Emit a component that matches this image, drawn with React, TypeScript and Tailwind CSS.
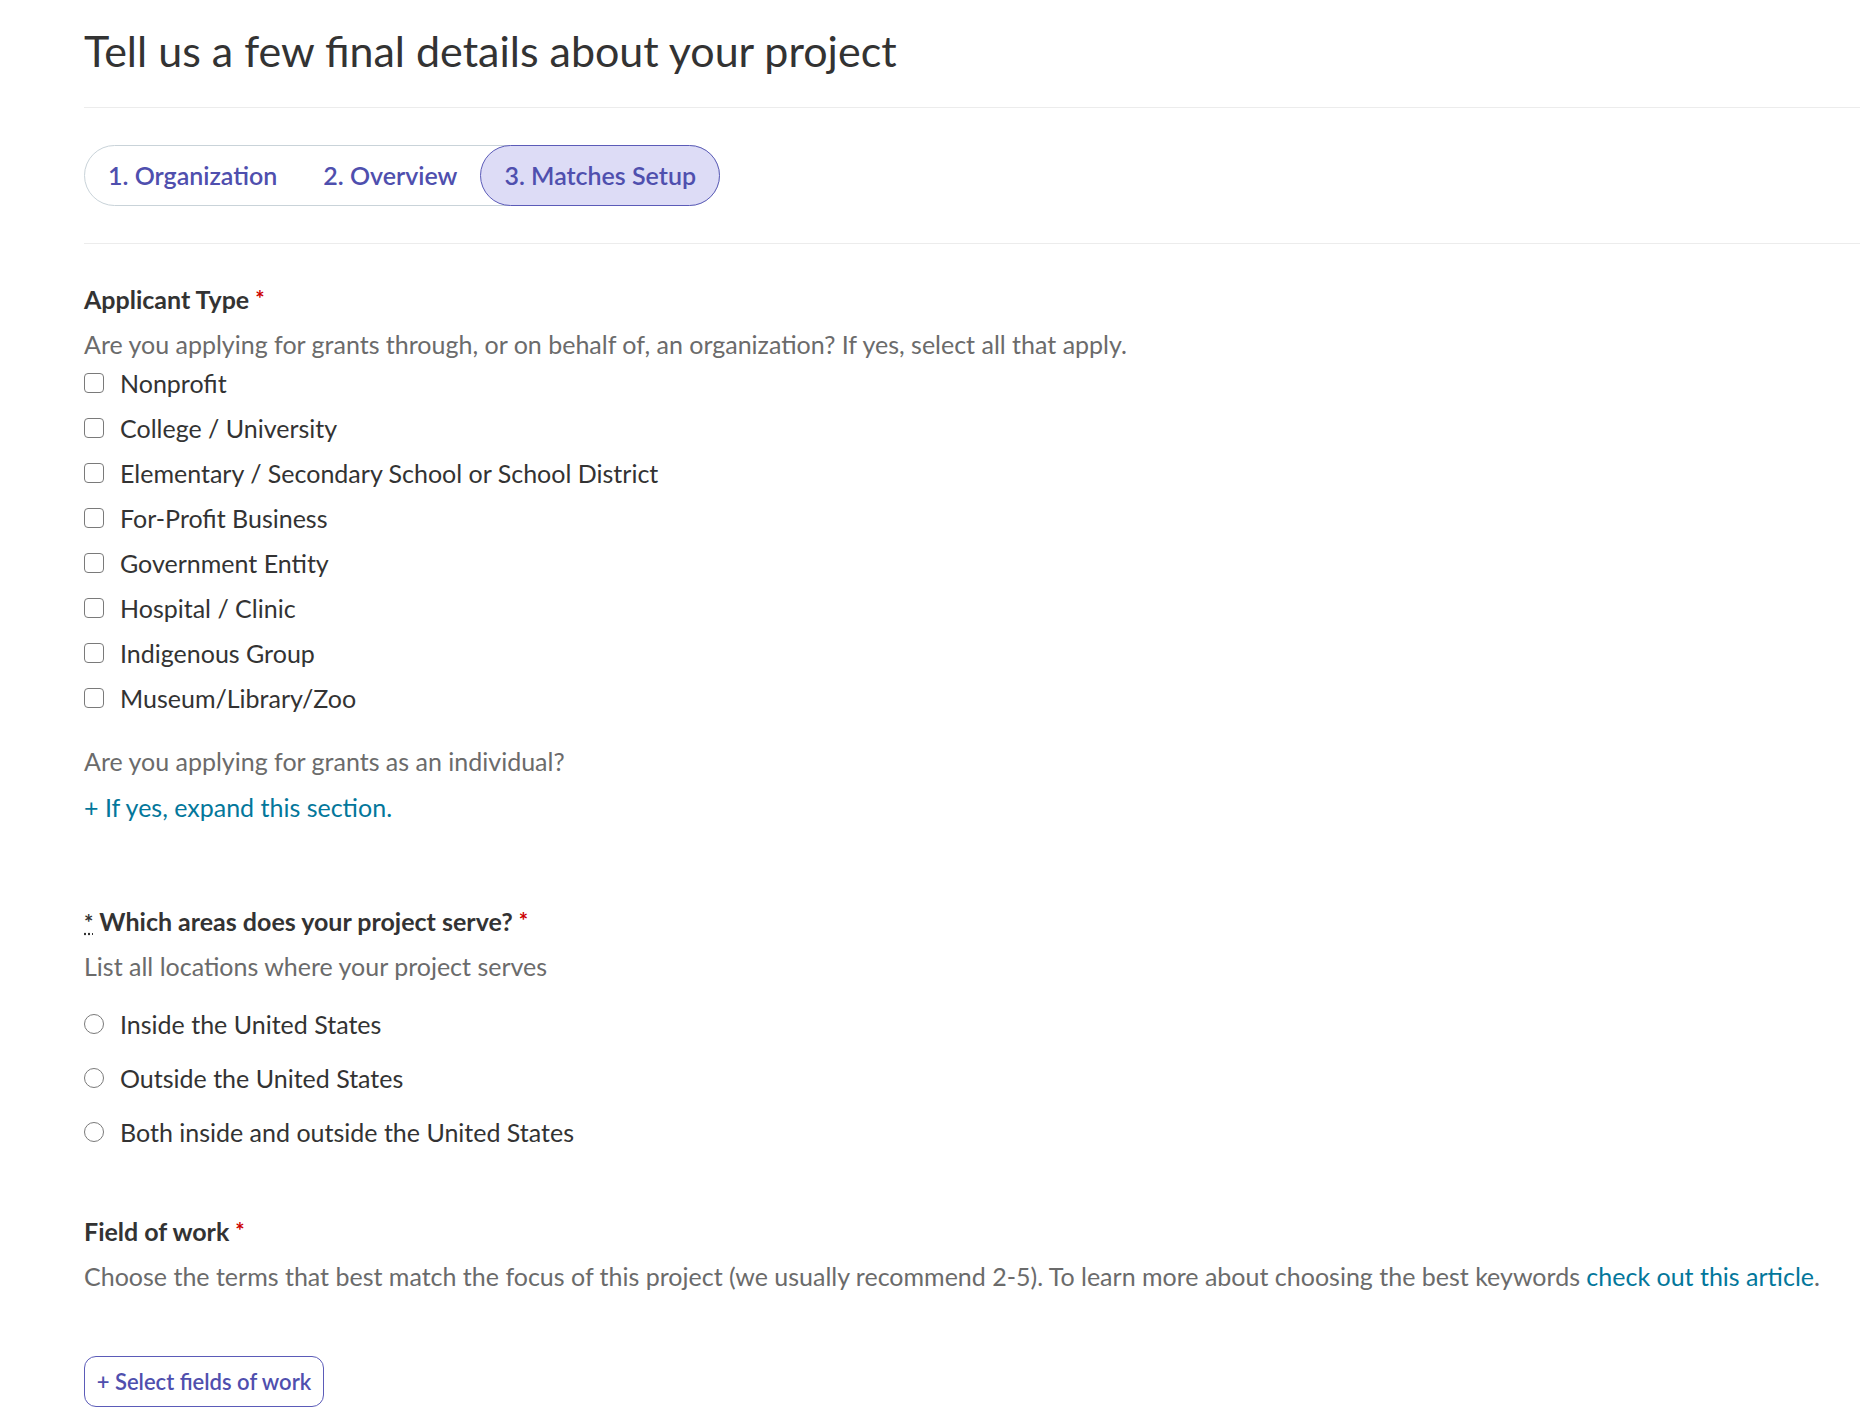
import React from 'react'

const orgTypes = [
  'Nonprofit',
  'College / University',
  'Elementary / Secondary School or School District',
  'For-Profit Business',
  'Government Entity',
  'Hospital / Clinic',
  'Indigenous Group',
  'Museum/Library/Zoo',
]

const areas = [
  'Inside the United States',
  'Outside the United States',
  'Both inside and outside the United States',
]

const steps = ['1. Organization', '2. Overview', '3. Matches Setup']

function Required() {
  return <span className="ml-[6px] text-[22px] align-top text-[#cc0000]">*</span>
}

export default function App() {
  return (
    <main className="min-h-screen bg-white pl-[84px] font-['Lato','Open_Sans',sans-serif] text-[#333333]">
      <h1 className="pt-[27px] text-[43px] leading-[48px] text-[#333333]">
        Tell us a few final details about your project
      </h1>

      <div className="mt-[32px] h-px bg-[#ececec]" />

      <div className="py-[37px]">
        <div className="inline-flex h-[61px] items-stretch rounded-full border border-[#c9d3d9]">
          {steps.map((step, i) => {
            const active = i === steps.length - 1
            return (
              <div
                key={step}
                className={
                  active
                    ? 'flex items-center rounded-full border border-[#5b5bb8] bg-[#dddcf6] px-[23px] text-[25px] font-semibold text-[#4f4fae] -my-px -mr-px'
                    : 'flex items-center px-[23px] text-[25px] font-semibold text-[#4f4fae]'
                }
              >
                {step}
              </div>
            )
          })}
        </div>
      </div>

      <div className="h-px bg-[#ececec]" />

      <section className="mt-[40px]">
        <h2 className="text-[25px] leading-[30px] font-bold">
          Applicant Type
          <Required />
        </h2>
        <p className="mt-[15px] text-[25px] leading-[30px] text-[#6b6b6b]">
          Are you applying for grants through, or on behalf of, an organization? If yes, select all that apply.
        </p>
        <ul className="mt-px flex flex-col">
          {orgTypes.map(t => (
            <li key={t} className="flex h-[45px] items-center gap-[16px]">
              <span className="size-[20px] rounded-[4px] border-[1.5px] border-[#7a7a7a] bg-white" />
              <span className="text-[25px] leading-[30px] text-[#333333]">{t}</span>
            </li>
          ))}
        </ul>

        <p className="mt-[26px] text-[25px] leading-[30px] text-[#6b6b6b]">
          Are you applying for grants as an individual?
        </p>
        <a className="mt-[16px] block text-[25px] leading-[30px] text-[#03779b]">
          + If yes, expand this section.
        </a>
      </section>

      <section className="mt-[84px]">
        <h2 className="text-[25px] leading-[30px] font-bold">
          <abbr className="mr-[6px] text-[22px] font-bold underline decoration-dotted">*</abbr>
          Which areas does your project serve?
          <Required />
        </h2>
        <p className="mt-[13px] text-[25px] leading-[30px] text-[#6b6b6b]">
          List all locations where your project serves
        </p>
        <ul className="mt-[16px] flex flex-col">
          {areas.map(a => (
            <li key={a} className="flex h-[54px] items-center gap-[16px]">
              <span className="size-[20px] rounded-full border-[1.5px] border-[#7a7a7a] bg-white" />
              <span className="text-[25px] leading-[30px] text-[#333333]">{a}</span>
            </li>
          ))}
        </ul>
      </section>

      <section className="mt-[57px] pb-[20px]">
        <h2 className="text-[25px] leading-[30px] font-bold">
          Field of work
          <Required />
        </h2>
        <p className="mt-[15px] text-[25px] leading-[30px] text-[#6b6b6b]">
          Choose the terms that best match the focus of this project (we usually recommend 2-5). To learn more about
          choosing the best keywords <a className="text-[#03779b]">check out this article</a>.
        </p>
        <button className="mt-[65px] flex h-[51px] w-[240px] items-center justify-center rounded-[12px] border border-[#5b5bb8] bg-white text-[22px] font-semibold text-[#4f4fae]">
          + Select fields of work
        </button>
      </section>
    </main>
  )
}
